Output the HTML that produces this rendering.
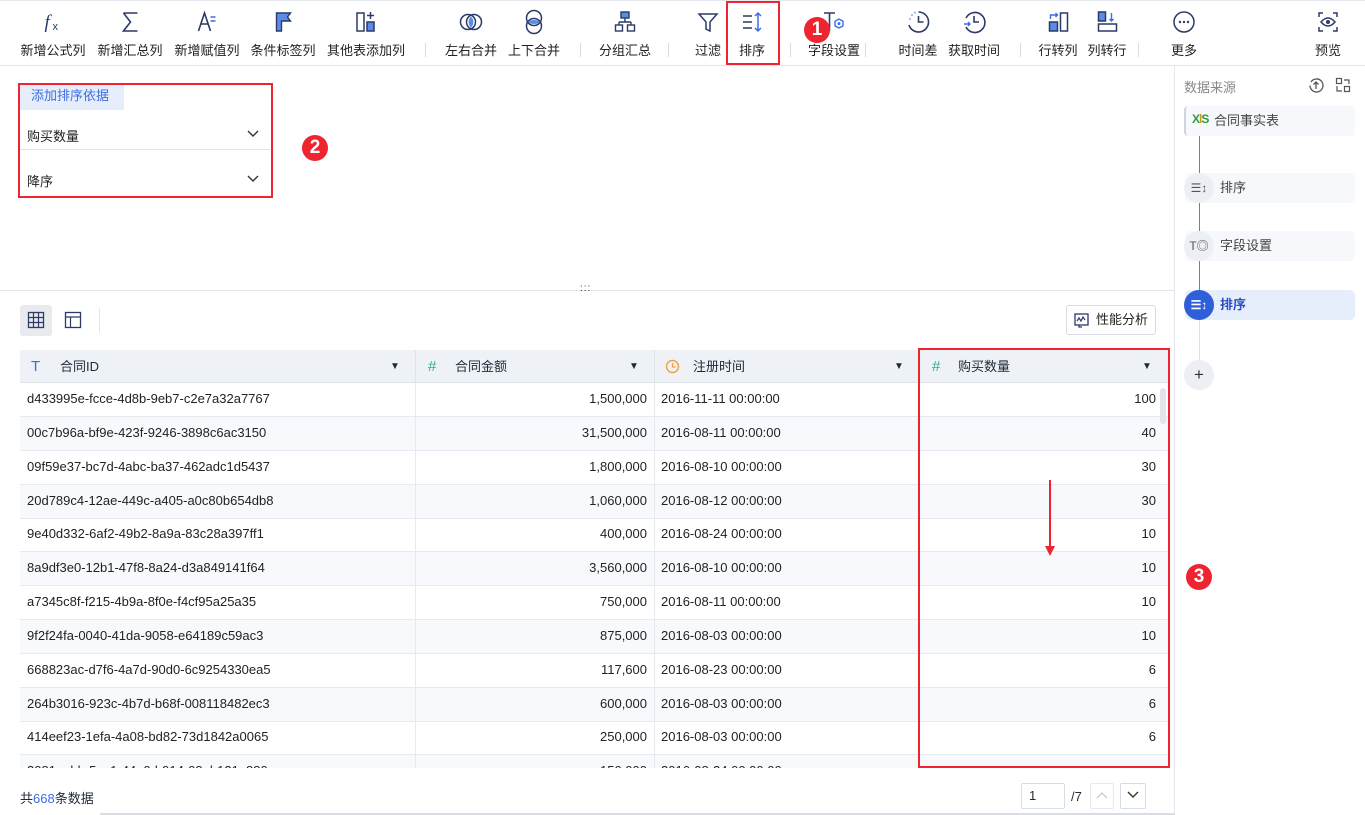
<!DOCTYPE html>
<html><head><meta charset="utf-8">
<style>
*{box-sizing:border-box;margin:0;padding:0}
body{width:1365px;height:815px;overflow:hidden;background:#fff;font-family:"Liberation Sans","Noto Sans CJK SC",sans-serif;font-size:13px;color:#1f2937;position:relative}
.abs{position:absolute}
.tb{position:absolute;top:0;left:0;width:1365px;height:66px;border-top:1px solid #e5e8ef;border-bottom:1px solid #e3e6ee;background:#fff}
.it{position:absolute;top:8px;text-align:center;transform:translateX(-50%);white-space:nowrap}
.it svg{display:block;margin:0 auto;width:24px;height:26px}
.it span{display:block;margin-top:5px;font-size:13px;color:#222}
.sep{position:absolute;top:42px;width:1px;height:14px;background:#d8dce4}
.badge{position:absolute;width:26px;height:26px;border-radius:50%;background:#ee2430;color:#fff;font-weight:bold;font-size:19px;text-align:center;line-height:26px}
.redbox{position:absolute;border:2px solid #ee2430}
.row{position:absolute;left:20px;width:1148px;height:34px;border-bottom:1px solid #e6e9ef}
.row div{position:absolute;top:0;height:34px;line-height:32px;font-size:13px;color:#222;white-space:nowrap;overflow:hidden}
.c1{left:7px;width:388px}.c2{left:395px;width:239px;text-align:right;padding-right:7px;border-left:1px solid #e6e9ef}
.c3{left:634px;width:264px;padding-left:6px;border-left:1px solid #e6e9ef}.c4{left:898px;width:250px;text-align:right;padding-right:12px;border-left:1px solid #e6e9ef}
.node{position:absolute;left:1185px;height:30px;width:170px;border-radius:5px;background:#f6f8fc;font-size:13px;color:#444;line-height:30px;padding-left:35px}
.circ{position:absolute;left:-1px;top:0;width:30px;height:30px;border-radius:50%;background:#eceff4;font-size:12px;color:#555;text-align:center;line-height:30px}
.hd{position:absolute;top:350px;height:33px;line-height:33px}
</style></head><body>
<div class="tb">
 <div class="it" style="left:53px"><svg viewBox="0 0 24 26"><text x="3" y="19" font-size="19" font-style="italic" font-family="Liberation Serif" fill="#2b3a67">f</text><text x="11" y="21" font-size="11" fill="#2b3a67">x</text></svg><span>新增公式列</span></div>
 <div class="it" style="left:130px"><svg viewBox="0 0 24 26"><path d="M5 4h14M5 4l7 9-7 9h14" stroke="#2b3a67" stroke-width="1.6" fill="none"/></svg><span>新增汇总列</span></div>
 <div class="it" style="left:207px"><svg viewBox="0 0 24 26"><path d="M3 22L9 4l6 18M5.5 15h7" stroke="#2b3a67" stroke-width="1.6" fill="none"/><path d="M15 8h5M15 12h5" stroke="#3d6ee0" stroke-width="1.5"/></svg><span>新增赋值列</span></div>
 <div class="it" style="left:283px"><svg viewBox="0 0 24 26"><path d="M5 4h14l-3 4 3 4H10v10H5z" stroke="#2b3a67" stroke-width="1.4" fill="#5b8de8"/></svg><span>条件标签列</span></div>
 <div class="it" style="left:366px"><svg viewBox="0 0 24 26"><rect x="3" y="4" width="7" height="18" stroke="#2b3a67" stroke-width="1.5" fill="none"/><rect x="13" y="13" width="7" height="9" stroke="#2b3a67" stroke-width="1.5" fill="#5b8de8"/><path d="M16.5 3v7M13 6.5h7" stroke="#2b3a67" stroke-width="1.5"/></svg><span>其他表添加列</span></div>
 <div class="sep" style="left:425px"></div>
 <div class="it" style="left:471px"><svg viewBox="0 0 24 26"><circle cx="9" cy="13" r="7.5" stroke="#2b3a67" stroke-width="1.5" fill="none"/><circle cx="15" cy="13" r="7.5" stroke="#2b3a67" stroke-width="1.5" fill="none"/><path d="M12 7.5a7.5 7.5 0 0 1 0 11a7.5 7.5 0 0 1 0-11z" fill="#5b8de8"/></svg><span>左右合并</span></div>
 <div class="it" style="left:534px"><svg viewBox="0 0 24 26"><circle cx="12" cy="9" r="7.5" stroke="#2b3a67" stroke-width="1.5" fill="none"/><circle cx="12" cy="17" r="7.5" stroke="#2b3a67" stroke-width="1.5" fill="none"/><path d="M6 13a7.5 5 0 0 1 12 0a7.5 5 0 0 1-12 0z" fill="#5b8de8"/></svg><span>上下合并</span></div>
 <div class="sep" style="left:580px"></div>
 <div class="it" style="left:625px"><svg viewBox="0 0 24 26"><rect x="8" y="3" width="8" height="6" stroke="#2b3a67" stroke-width="1.4" fill="#5b8de8"/><path d="M12 9v4M6 13h12M6 13v3M18 13v3" stroke="#2b3a67" stroke-width="1.4" fill="none"/><rect x="2.5" y="16" width="7" height="6" stroke="#2b3a67" stroke-width="1.4" fill="none"/><rect x="14.5" y="16" width="7" height="6" stroke="#2b3a67" stroke-width="1.4" fill="none"/></svg><span>分组汇总</span></div>
 <div class="sep" style="left:668px"></div>
 <div class="it" style="left:708px"><svg viewBox="0 0 24 26"><path d="M3 5h18l-7 8v9l-4-2v-7z" stroke="#2b3a67" stroke-width="1.5" fill="none"/></svg><span>过滤</span></div>
 <div class="it" style="left:752px"><svg viewBox="0 0 24 26"><path d="M3 7h9M3 13h9M3 19h9" stroke="#2b3a67" stroke-width="1.6"/><path d="M18 4v18M15 7l3-3 3 3M15 19l3 3 3-3" stroke="#3d6ee0" stroke-width="1.5" fill="none"/></svg><span>排序</span></div>
 <div class="sep" style="left:790px"></div>
 <div class="it" style="left:834px"><svg viewBox="0 0 24 26"><path d="M2 4h11M7.5 4v18" stroke="#2b3a67" stroke-width="1.6"/><path d="M17 10l4 2.3v4.6L17 19l-4-2.1v-4.6z" stroke="#3d6ee0" stroke-width="1.4" fill="none"/><circle cx="17" cy="14.6" r="1.5" fill="#3d6ee0"/></svg><span>字段设置</span></div>
 <div class="sep" style="left:865px"></div>
 <div class="it" style="left:918px"><svg viewBox="0 0 24 26"><path d="M12 3a10 10 0 1 1-9.5 13" stroke="#2b3a67" stroke-width="1.6" fill="none"/><path d="M12 7v6h5" stroke="#2b3a67" stroke-width="1.6" fill="none"/><path d="M3 10l1 0M5 6l1 0M8 3.5l1 0" stroke="#3d6ee0" stroke-width="1.8"/></svg><span>时间差</span></div>
 <div class="it" style="left:974px"><svg viewBox="0 0 24 26"><path d="M4 9a10 10 0 1 1 0 9" stroke="#2b3a67" stroke-width="1.6" fill="none"/><path d="M12 7v6h5" stroke="#2b3a67" stroke-width="1.6" fill="none"/><path d="M2 15h6M6 13l2 2-2 2" stroke="#3d6ee0" stroke-width="1.4" fill="none"/></svg><span>获取时间</span></div>
 <div class="sep" style="left:1020px"></div>
 <div class="it" style="left:1058px"><svg viewBox="0 0 24 26"><rect x="14" y="4" width="7" height="18" stroke="#2b3a67" stroke-width="1.5" fill="none"/><rect x="3" y="13" width="8" height="9" stroke="#2b3a67" stroke-width="1.5" fill="#5b8de8"/><path d="M4 10V6h7M9 4l2 2-2 2" stroke="#3d6ee0" stroke-width="1.4" fill="none"/></svg><span>行转列</span></div>
 <div class="it" style="left:1107px"><svg viewBox="0 0 24 26"><rect x="3" y="15" width="18" height="7" stroke="#2b3a67" stroke-width="1.5" fill="none"/><rect x="3" y="3" width="7" height="9" stroke="#2b3a67" stroke-width="1.5" fill="#5b8de8"/><path d="M16 4v8M14 10l2 2 2-2" stroke="#3d6ee0" stroke-width="1.4" fill="none"/></svg><span>列转行</span></div>
 <div class="sep" style="left:1138px"></div>
 <div class="it" style="left:1184px"><svg viewBox="0 0 24 26"><circle cx="12" cy="13" r="10" stroke="#2b3a67" stroke-width="1.5" fill="none"/><circle cx="8" cy="13" r="1.2" fill="#2b3a67"/><circle cx="12" cy="13" r="1.2" fill="#2b3a67"/><circle cx="16" cy="13" r="1.2" fill="#2b3a67"/></svg><span>更多</span></div>
 <div class="it" style="left:1328px"><svg viewBox="0 0 24 26"><path d="M3 8V4h4M17 4h4v4M21 18v4h-4M7 22H3v-4" stroke="#2b3a67" stroke-width="1.5" fill="none"/><path d="M5 13q7-8 14 0q-7 8-14 0z" stroke="#2b3a67" stroke-width="1.5" fill="none"/><circle cx="12" cy="13" r="2" fill="#2b3a67"/></svg><span>预览</span></div>
</div>
<div class="redbox" style="left:726px;top:1px;width:54px;height:64px"></div>
<div class="badge" style="left:804px;top:17px">1</div>

<div class="abs" style="left:20px;top:84px;width:104px;height:26px;background:#e6eefc;color:#3d6ee0;font-size:13px;line-height:24px;padding-left:11px">添加排序依据</div>
<div class="abs" style="left:20px;top:126px;width:250px;font-size:13px;color:#222;padding-left:7px">购买数量<span style="position:absolute;right:10px;top:0px"><svg width="14" height="14" viewBox="0 0 14 14"><path d="M2 5l5 5 5-5" stroke="#333" stroke-width="1.4" fill="none"/></svg></span></div>
<div class="abs" style="left:20px;top:149px;width:250px;height:1px;background:#dfe2e8"></div>
<div class="abs" style="left:20px;top:171px;width:250px;font-size:13px;color:#222;padding-left:7px">降序<span style="position:absolute;right:10px;top:0px"><svg width="14" height="14" viewBox="0 0 14 14"><path d="M2 5l5 5 5-5" stroke="#333" stroke-width="1.4" fill="none"/></svg></span></div>
<div class="redbox" style="left:18px;top:83px;width:255px;height:115px"></div>
<div class="badge" style="left:302px;top:135px">2</div>

<div class="abs" style="left:0;top:290px;width:1175px;height:1px;background:#e3e6ee"></div>
<div class="abs" style="left:580px;top:283px;font-size:10px;color:#333;letter-spacing:1px">:::</div>
<div class="abs" style="left:1174px;top:66px;width:1px;height:749px;background:#e3e6ee"></div>

<div class="abs" style="left:20px;top:305px;width:32px;height:31px;background:#e8eaee;border-radius:3px"></div>
<svg class="abs" style="left:27px;top:311px" width="18" height="18" viewBox="0 0 18 18"><rect x="1.5" y="1.5" width="15" height="15" stroke="#2b3a67" stroke-width="1.3" fill="none"/><path d="M1.5 6.5h15M1.5 11.5h15M6.5 1.5v15M11.5 1.5v15" stroke="#2b3a67" stroke-width="1.2"/></svg>
<svg class="abs" style="left:64px;top:311px" width="18" height="18" viewBox="0 0 18 18"><rect x="1.5" y="1.5" width="15" height="15" stroke="#2b3a67" stroke-width="1.3" fill="none"/><path d="M1.5 6h15M6.5 6v10.5" stroke="#2b3a67" stroke-width="1.2"/></svg>
<div class="abs" style="left:99px;top:308px;width:1px;height:25px;background:#e3e6ee"></div>
<div class="abs" style="left:1066px;top:305px;width:90px;height:30px;border:1px solid #d8dce4;border-radius:3px;font-size:13px;line-height:28px;padding-left:29px;color:#222">性能分析
<svg class="abs" style="left:7px;top:7px" width="15" height="15" viewBox="0 0 15 15"><rect x="1" y="1" width="13" height="11" stroke="#2b3a67" stroke-width="1.3" fill="none"/><path d="M3 8l2-3 2 3 2-4 2 3" stroke="#2b3a67" stroke-width="1.2" fill="none"/><path d="M5 12v2h3" stroke="#2b3a67" stroke-width="1.2" fill="none"/></svg></div>

<div class="abs" style="left:20px;top:350px;width:1148px;height:33px;background:#eef1f6;border-bottom:1px solid #dfe3ea"></div>
<div class="abs" style="left:415px;top:350px;width:1px;height:33px;background:#dfe3ea"></div>
<div class="abs" style="left:654px;top:350px;width:1px;height:33px;background:#dfe3ea"></div>
<div class="abs" style="left:918px;top:350px;width:1px;height:33px;background:#dfe3ea"></div>
<div class="hd" style="left:31px;color:#3d6ee0;font-size:15px">T</div>
<div class="hd" style="left:60px">合同ID</div><div class="hd" style="left:390px;font-size:10px">▼</div>
<div class="hd" style="left:428px;color:#2bb09a;font-size:15px">#</div>
<div class="hd" style="left:455px">合同金额</div><div class="hd" style="left:629px;font-size:10px">▼</div>
<svg class="abs" style="left:665px;top:359px" width="15" height="15" viewBox="0 0 15 15"><circle cx="7.5" cy="7.5" r="6" stroke="#f0a23c" stroke-width="1.4" fill="none"/><path d="M7.5 4v4h3" stroke="#f0a23c" stroke-width="1.3" fill="none"/></svg>
<div class="hd" style="left:693px">注册时间</div><div class="hd" style="left:894px;font-size:10px">▼</div>
<div class="hd" style="left:932px;color:#2bb09a;font-size:15px">#</div>
<div class="hd" style="left:958px">购买数量</div><div class="hd" style="left:1142px;font-size:10px">▼</div>

<div class="abs" style="left:0;top:383px;width:1175px;height:385px;overflow:hidden">
<div style="position:relative;top:-383px">
<div class="row" style="top:383px"><div class="c1">d433995e-fcce-4d8b-9eb7-c2e7a32a7767</div><div class="c2">1,500,000</div><div class="c3">2016-11-11 00:00:00</div><div class="c4">100</div></div>
<div class="row" style="top:417px;background:#f7f9fc"><div class="c1">00c7b96a-bf9e-423f-9246-3898c6ac3150</div><div class="c2">31,500,000</div><div class="c3">2016-08-11 00:00:00</div><div class="c4">40</div></div>
<div class="row" style="top:450.5px"><div class="c1">09f59e37-bc7d-4abc-ba37-462adc1d5437</div><div class="c2">1,800,000</div><div class="c3">2016-08-10 00:00:00</div><div class="c4">30</div></div>
<div class="row" style="top:484.5px;background:#f7f9fc"><div class="c1">20d789c4-12ae-449c-a405-a0c80b654db8</div><div class="c2">1,060,000</div><div class="c3">2016-08-12 00:00:00</div><div class="c4">30</div></div>
<div class="row" style="top:518px"><div class="c1">9e40d332-6af2-49b2-8a9a-83c28a397ff1</div><div class="c2">400,000</div><div class="c3">2016-08-24 00:00:00</div><div class="c4">10</div></div>
<div class="row" style="top:552px;background:#f7f9fc"><div class="c1">8a9df3e0-12b1-47f8-8a24-d3a849141f64</div><div class="c2">3,560,000</div><div class="c3">2016-08-10 00:00:00</div><div class="c4">10</div></div>
<div class="row" style="top:586px"><div class="c1">a7345c8f-f215-4b9a-8f0e-f4cf95a25a35</div><div class="c2">750,000</div><div class="c3">2016-08-11 00:00:00</div><div class="c4">10</div></div>
<div class="row" style="top:620px;background:#f7f9fc"><div class="c1">9f2f24fa-0040-41da-9058-e64189c59ac3</div><div class="c2">875,000</div><div class="c3">2016-08-03 00:00:00</div><div class="c4">10</div></div>
<div class="row" style="top:653.5px"><div class="c1">668823ac-d7f6-4a7d-90d0-6c9254330ea5</div><div class="c2">117,600</div><div class="c3">2016-08-23 00:00:00</div><div class="c4">6</div></div>
<div class="row" style="top:687.5px;background:#f7f9fc"><div class="c1">264b3016-923c-4b7d-b68f-008118482ec3</div><div class="c2">600,000</div><div class="c3">2016-08-03 00:00:00</div><div class="c4">6</div></div>
<div class="row" style="top:721px"><div class="c1">414eef23-1efa-4a08-bd82-73d1842a0065</div><div class="c2">250,000</div><div class="c3">2016-08-03 00:00:00</div><div class="c4">6</div></div>
<div class="row" style="top:755px;background:#f7f9fc"><div class="c1">2081eabb-5ec1-44e0-b914-08eb121e880a</div><div class="c2">150,000</div><div class="c3">2016-08-24 00:00:00</div><div class="c4">5</div></div>
</div></div>
<div class="abs" style="left:1160px;top:388px;width:6px;height:36px;background:#e1e4ea;border-radius:3px"></div>
<div class="redbox" style="left:918px;top:348px;width:252px;height:420px"></div>
<div class="abs" style="left:1049px;top:480px;width:2px;height:68px;background:#ee2430"></div>
<svg class="abs" style="left:1045px;top:546px" width="10" height="12" viewBox="0 0 10 12"><path d="M0 0h10L5 10z" fill="#ee2430"/></svg>
<div class="badge" style="left:1186px;top:564px">3</div>

<div class="abs" style="left:20px;top:788px;font-size:13px">共<span style="color:#3d6ee0">668</span>条数据</div>
<div class="abs" style="left:1021px;top:783px;width:44px;height:26px;border:1px solid #d8dce4;border-radius:2px;padding-left:7px;line-height:24px">1</div>
<div class="abs" style="left:1071px;top:789px">/7</div>
<div class="abs" style="left:1090px;top:783px;width:24px;height:26px;border:1px solid #e8eaee;border-radius:2px;color:#ccc;text-align:center;line-height:24px"><svg width="12" height="10" viewBox="0 0 12 10"><path d="M1 8l5-5 5 5" stroke="#ccc" stroke-width="1.3" fill="none"/></svg></div>
<div class="abs" style="left:1120px;top:783px;width:26px;height:26px;border:1px solid #d8dce4;border-radius:2px;text-align:center;line-height:24px"><svg width="12" height="10" viewBox="0 0 12 10"><path d="M1 2l5 5 5-5" stroke="#333" stroke-width="1.4" fill="none"/></svg></div>
<div class="abs" style="left:100px;top:813px;width:1075px;height:2px;background:#d8dce4"></div>

<div class="abs" style="left:1184px;top:77px;font-size:13px;color:#888">数据来源</div>
<svg class="abs" style="left:1308px;top:77px" width="16" height="16" viewBox="0 0 16 16"><path d="M3 5a6.5 6.5 0 1 1-1 3.5" stroke="#555" stroke-width="1.3" fill="none"/><path d="M8 12V5M5.5 7.5L8 5l2.5 2.5" stroke="#555" stroke-width="1.3" fill="none"/></svg>
<svg class="abs" style="left:1335px;top:77px" width="16" height="16" viewBox="0 0 16 16"><rect x="1.5" y="1.5" width="5" height="5" stroke="#555" stroke-width="1.2" fill="none"/><rect x="9.5" y="9.5" width="5" height="5" stroke="#555" stroke-width="1.2" fill="none"/><path d="M9 3h5v4M2 9v5h5" stroke="#555" stroke-width="1.2" fill="none"/></svg>
<div class="abs" style="left:1184px;top:106px;width:171px;height:30px;background:#f6f8fc;border-left:2px solid #d0d4dc;border-radius:4px;padding-left:28px;line-height:29px;color:#444">合同事实表</div>
<div class="abs" style="left:1192px;top:112px;font-size:12px;font-weight:bold;color:#2e9c3a;letter-spacing:-1px">X<span style="color:#c89a1c">l</span>S</div>
<div class="abs" style="left:1199px;top:136px;width:1px;height:175px;background:#5b7fe0"></div>
<div class="abs" style="left:1199px;top:320px;width:1px;height:45px;background:#dcdfe6"></div>
<div class="node" style="top:173px">排序<div class="circ">☰↕</div></div>
<div class="node" style="top:231px">字段设置<div class="circ">T◎</div></div>
<div class="node" style="top:290px;background:#e6eefc;color:#2b4fc4;font-weight:bold">排序<div class="circ" style="background:#2f5fd8;color:#fff">☰↕</div></div>
<div class="abs" style="left:1184px;top:360px;width:30px;height:30px;border-radius:50%;background:#eceff4;text-align:center;line-height:29px;font-size:17px;color:#333">+</div>
</body></html>
